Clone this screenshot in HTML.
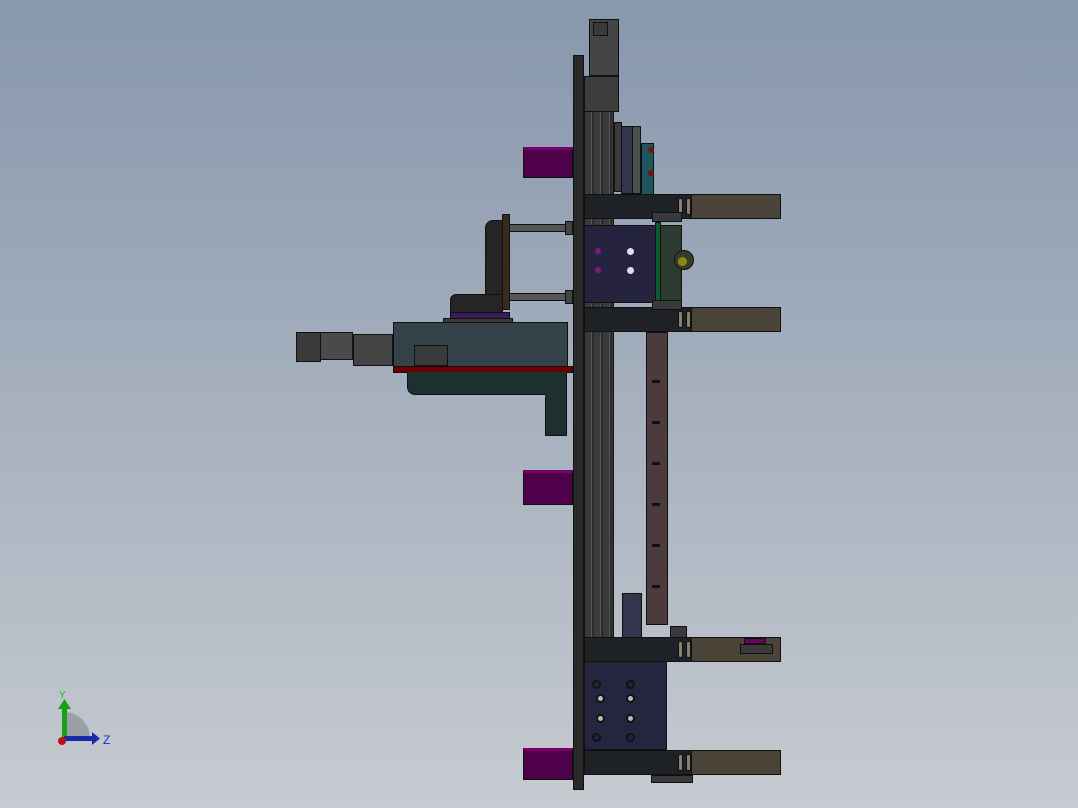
<!DOCTYPE html><html><head><style>
body{margin:0;width:1078px;height:808px;overflow:hidden;background:linear-gradient(#8797ad,#a6b0be 50%,#c7cbd1);position:relative;font-family:"Liberation Sans",sans-serif}
div{position:absolute;box-sizing:border-box;border:1px solid #111}
.n{border:none}
.h{border:2px solid #111;border-radius:50%;width:9px;height:9px;background:#bbb}
.s{border:1px solid #111;width:5px;height:17px;background:#8a8070;border-radius:2px}
</style></head><body>
<div style="left:584px;top:110px;width:30px;height:530px;background:repeating-linear-gradient(90deg,#3a3a3a 0 6px,#555 6px 7px,#2c2c2c 7px 9px)"></div>
<div style="left:589px;top:19px;width:30px;height:57px;background:#444"></div>
<div style="left:593px;top:22px;width:15px;height:14px;background:#3a3a3a"></div>
<div style="left:584px;top:76px;width:35px;height:36px;background:#3d3d3d"></div>
<div style="left:614px;top:122px;width:8px;height:70px;background:#3a3a3a"></div>
<div style="left:621px;top:126px;width:20px;height:68px;background:#35344f"></div>
<div style="left:632px;top:126px;width:9px;height:68px;background:#4a4f4c"></div>
<div style="left:641px;top:143px;width:13px;height:52px;background:#1d5560"></div>
<div class="n" style="left:648px;top:147px;width:6px;height:6px;background:#7a1010;border-radius:50%"></div>
<div class="n" style="left:648px;top:170px;width:6px;height:6px;background:#7a1010;border-radius:50%"></div>
<div style="left:573px;top:55px;width:11px;height:735px;background:#2a2a2a"></div>
<div style="left:523px;top:147px;width:50px;height:31px;background:#4e0049;border-top:3px solid #7a0070"></div>
<div style="left:523px;top:470px;width:50px;height:35px;background:#4e0049;border-top:3px solid #7a0070"></div>
<div style="left:523px;top:748px;width:50px;height:32px;background:#4e0049;border-top:3px solid #7a0070"></div>
<div style="left:584px;top:225px;width:72px;height:78px;background:#25233d"></div>
<div class="n" style="left:595px;top:248px;width:6px;height:6px;border-radius:50%;background:#7a1a80"></div>
<div class="n" style="left:595px;top:267px;width:6px;height:6px;border-radius:50%;background:#7a1a80"></div>
<div class="n" style="left:627px;top:248px;width:7px;height:7px;border-radius:50%;background:#dde"></div>
<div class="n" style="left:627px;top:267px;width:7px;height:7px;border-radius:50%;background:#dde"></div>
<div style="left:584px;top:661px;width:83px;height:89px;background:#262540"></div>
<div class="h" style="left:592px;top:680px;background:#262540"></div>
<div class="h" style="left:596px;top:694px"></div>
<div class="h" style="left:592px;top:733px;background:#262540"></div>
<div class="h" style="left:596px;top:714px"></div>
<div class="h" style="left:626px;top:680px;background:#262540"></div>
<div class="h" style="left:626px;top:694px"></div>
<div class="h" style="left:626px;top:714px"></div>
<div class="h" style="left:626px;top:733px;background:#262540"></div>
<div style="left:655px;top:222px;width:6px;height:84px;background:#0d5a30"></div>
<div style="left:660px;top:225px;width:22px;height:80px;background:#2d3a30"></div>
<div style="left:674px;top:250px;width:20px;height:20px;background:#3a3a2a;border-radius:50%"></div>
<div class="n" style="left:678px;top:257px;width:9px;height:9px;border-radius:50%;background:#8a8a10"></div>
<div style="left:646px;top:332px;width:22px;height:293px;background:#4b3b3c"></div>
<div class="n" style="left:652px;top:380px;width:8px;height:3px;background:#111"></div>
<div class="n" style="left:652px;top:421px;width:8px;height:3px;background:#111"></div>
<div class="n" style="left:652px;top:462px;width:8px;height:3px;background:#111"></div>
<div class="n" style="left:652px;top:503px;width:8px;height:3px;background:#111"></div>
<div class="n" style="left:652px;top:544px;width:8px;height:3px;background:#111"></div>
<div class="n" style="left:652px;top:585px;width:8px;height:3px;background:#111"></div>
<div style="left:622px;top:593px;width:20px;height:45px;background:#35344f"></div>
<div style="left:670px;top:626px;width:17px;height:12px;background:#3a3a3a"></div>
<div style="left:584px;top:194px;width:108px;height:25px;background:#1e2126"></div>
<div style="left:691px;top:194px;width:90px;height:25px;background:#4a4337"></div>
<div style="left:584px;top:307px;width:108px;height:25px;background:#1e2126"></div>
<div style="left:691px;top:307px;width:90px;height:25px;background:#4a4337"></div>
<div style="left:584px;top:637px;width:108px;height:25px;background:#1e2126"></div>
<div style="left:691px;top:637px;width:90px;height:25px;background:#4a4337"></div>
<div style="left:740px;top:644px;width:33px;height:10px;background:#3a3a3a"></div>
<div style="left:744px;top:638px;width:22px;height:6px;background:#6a0060"></div>
<div style="left:584px;top:750px;width:108px;height:25px;background:#1e2126"></div>
<div style="left:691px;top:750px;width:90px;height:25px;background:#4a4337"></div>
<div class="s" style="left:678px;top:198px"></div><div class="s" style="left:686px;top:198px"></div>
<div class="s" style="left:678px;top:311px"></div><div class="s" style="left:686px;top:311px"></div>
<div class="s" style="left:678px;top:641px"></div><div class="s" style="left:686px;top:641px"></div>
<div class="s" style="left:678px;top:754px"></div><div class="s" style="left:686px;top:754px"></div>
<div style="left:651px;top:775px;width:42px;height:8px;background:#3a3a3a"></div>
<div style="left:652px;top:212px;width:30px;height:10px;background:#3a3a3a"></div>
<div style="left:652px;top:300px;width:30px;height:10px;background:#3a3a3a"></div>
<div style="left:509px;top:224px;width:60px;height:8px;background:#555"></div>
<div style="left:509px;top:293px;width:60px;height:8px;background:#555"></div>
<div style="left:565px;top:221px;width:8px;height:14px;background:#444"></div>
<div style="left:565px;top:290px;width:8px;height:14px;background:#444"></div>
<div style="left:485px;top:220px;width:18px;height:95px;background:#252525;border-radius:8px 0 0 0"></div>
<div style="left:450px;top:294px;width:53px;height:22px;background:#252525;border-radius:6px 0 0 0"></div>
<div style="left:502px;top:214px;width:8px;height:96px;background:#3a2a18"></div>
<div style="left:450px;top:312px;width:60px;height:7px;background:#3a1a5a"></div>
<div style="left:443px;top:318px;width:70px;height:7px;background:#3a3a3a"></div>
<div style="left:393px;top:322px;width:175px;height:45px;background:#34424a"></div>
<div style="left:414px;top:345px;width:34px;height:21px;background:#3a3a3a"></div>
<div style="left:296px;top:332px;width:25px;height:30px;background:#3a3a3a"></div>
<div style="left:320px;top:332px;width:33px;height:28px;background:#4a4a4a"></div>
<div style="left:353px;top:334px;width:40px;height:32px;background:#444"></div>
<div style="left:393px;top:366px;width:180px;height:7px;background:#6a0000"></div>
<div style="left:407px;top:372px;width:160px;height:23px;background:#1e2f2f;border-radius:0 0 0 8px;border-top:none"></div>
<div style="left:545px;top:390px;width:22px;height:46px;background:#1e2f2f;border-radius:8px 0 0 0;border-top:none"></div>
<div class="n" style="left:546px;top:373px;width:20px;height:30px;background:#1e2f2f"></div>
<svg style="position:absolute;left:50px;top:685px" width="70" height="70">
<path d="M14 53 L14 27 A26 26 0 0 1 40 53 Z" fill="#9aa0a8"/>
<rect x="12" y="20" width="5" height="34" fill="#17a017"/>
<polygon points="8,24 14.5,14 21,24" fill="#17a017"/>
<rect x="14" y="51" width="30" height="5" fill="#1a2aa8"/>
<polygon points="42,47 50,53.5 42,60" fill="#1a2aa8"/>
<circle cx="12" cy="56" r="4" fill="#c01010"/>
<text x="9" y="13" font-size="10" fill="#17c017">Y</text>
<text x="53" y="59" font-size="12" fill="#1a2ad0">Z</text>
</svg>
</body></html>
